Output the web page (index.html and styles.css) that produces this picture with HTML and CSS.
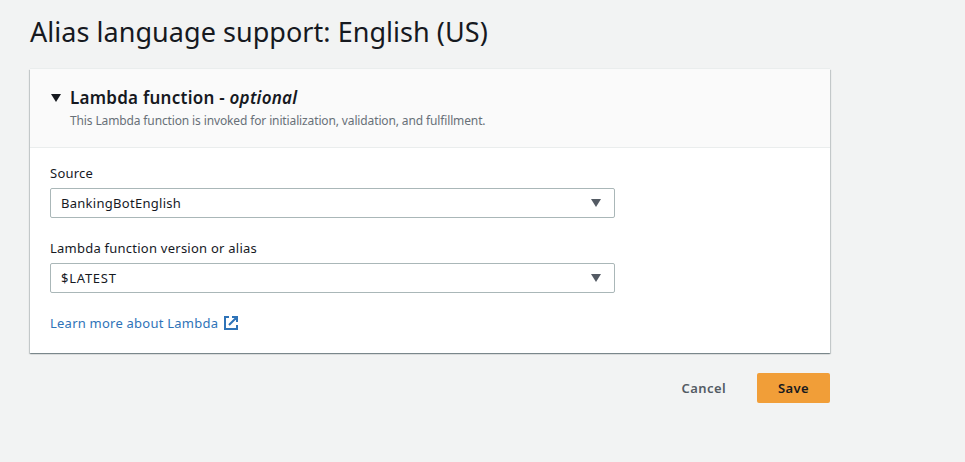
FILE: index.html
```html
<!DOCTYPE html>
<html lang="en">
<head>
<meta charset="utf-8">
<title>Alias language support</title>
<link rel="stylesheet" href="styles.css">
</head>
<body>
<main class="page">
  <h1 class="title"><span>Alias language support: English (US)</span></h1>
  <section class="panel">
    <header class="panel-header">
      <svg class="caret" viewBox="0 0 10 8"><path d="M0 0h10L5 8z"/></svg>
      <div>
        <h2 class="heading">Lambda function - <em>optional</em></h2>
        <p class="description">This Lambda function is invoked for initialization, validation, and fulfillment.</p>
      </div>
    </header>
    <div class="panel-body">
      <div class="field">
        <div class="label">Source</div>
        <div class="select"><span>BankingBotEnglish</span><svg class="arrow" viewBox="0 0 10 8"><path d="M0 0h10L5 8z"/></svg></div>
      </div>
      <div class="field">
        <div class="label">Lambda function version or alias</div>
        <div class="select"><span class="latest">$LATEST</span><svg class="arrow" viewBox="0 0 10 8"><path d="M0 0h10L5 8z"/></svg></div>
      </div>
      <a class="link"><span>Learn more about Lambda</span><svg class="external" viewBox="0 0 14 14"><path d="M5 1H1v12h12V9M8 1h5v5M13 1L5 9"/></svg></a>
    </div>
  </section>
  <div class="actions">
    <button class="button cancel">Cancel</button>
    <button class="button save">Save</button>
  </div>
</main>
</body>
</html>
```
FILE: styles.css
```css
* { box-sizing: border-box; }
body {
  margin: 0;
  background: #f2f3f3;
  color: #16191f;
  font: 14px/20px "Noto Sans", "Open Sans", sans-serif;
}
.page { width: 830px; padding: 14px 0 0 30px; }
.title { margin: 0 0 19px; font-size: 27px; line-height: 36px; font-weight: 400; letter-spacing: .04px; white-space: nowrap; }
.panel {
  height: 284px;
  background: #fff;
  box-shadow: 0 1px 1px 0 rgba(0, 28, 36, .3), 1px 1px 1px 0 rgba(0, 28, 36, .15), -1px 1px 1px 0 rgba(0, 28, 36, .15), 0 -1px 0 #eaeded;
}
.panel-header {
  display: flex;
  height: 79px;
  padding: 18px 20px 0 21px;
  background: #fafafa;
  border-bottom: 1px solid #eaeded;
  white-space: nowrap;
}
.caret { width: 10px; height: 8px; margin: 7px 9px 0 0; fill: #16191f; }
.heading { margin: 0; font-size: 17px; line-height: 22px; font-weight: 600; letter-spacing: .25px; }
.description { margin: 3px 0 0; color: #687078; font-size: 12px; line-height: 18px; letter-spacing: -.13px; }
.panel-body { padding: 15px 20px 0; }
.field { width: 565px; margin-bottom: 20px; }
.label { margin-bottom: 5px; font-size: 13px; letter-spacing: .24px; }
.select {
  display: flex;
  align-items: center;
  justify-content: space-between;
  height: 30px;
  padding: 0 13px 0 10px;
  border: 1px solid #aab7b8;
  border-radius: 2px;
  font-size: 13px;
  letter-spacing: .28px;
}
.latest { letter-spacing: .75px; }
.arrow { width: 10px; height: 8px; fill: #545b64; }
.link { display: flex; align-items: center; color: #2e73b8; font-size: 13px; letter-spacing: .23px; }
.external { width: 14px; height: 14px; margin-left: 6px; fill: none; stroke: #2e73b8; stroke-width: 2; }
.actions { display: flex; justify-content: flex-end; margin-top: 20px; }
.button {
  height: 30px;
  padding: 0;
  border: 0;
  border-radius: 2px;
  background: none;
  color: #545b64;
  font: 600 13px/20px "Noto Sans", "Open Sans", sans-serif;
  letter-spacing: .4px;
}
.cancel { margin-right: 31px; }
.save { width: 73px; background: #f19e38; color: #16191f; }
```
